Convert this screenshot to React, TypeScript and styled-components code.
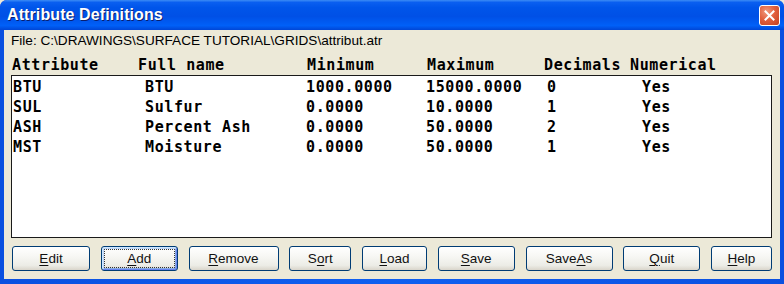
import React from "react";
import styled, { createGlobalStyle } from "styled-components";

const Global = createGlobalStyle`
  html, body { margin: 0; padding: 0; background: #ece9d8; }
  body { width: 784px; height: 284px; overflow: hidden; }
`;

const Window = styled.div`
  width: 784px;
  height: 284px;
  display: flex;
  flex-direction: column;
  background: #0831d9;
  border-radius: 7px 7px 0 0;
  overflow: hidden;
`;

const TitleBar = styled.div`
  height: 30px;
  flex: none;
  display: flex;
  align-items: center;
  justify-content: space-between;
  padding: 0 4px 0 7px;
  box-sizing: border-box;
  background: linear-gradient(
    to bottom,
    #3c8cf5 0%,
    #0a5ff0 8%,
    #0055ea 25%,
    #0050e6 55%,
    #0060f8 85%,
    #0046d6 100%
  );
`;

const Title = styled.span`
  font-family: "Liberation Sans", Arial, sans-serif;
  font-weight: bold;
  font-size: 16px;
  color: #ffffff;
  text-shadow: 1px 1px 0 #0a1e6e;
  letter-spacing: 0.1px;
`;

const CloseButton = styled.div`
  width: 21px;
  height: 21px;
  box-sizing: border-box;
  border: 1px solid #ffffff;
  border-radius: 3px;
  background: radial-gradient(circle at 35% 30%, #f09a7e 0%, #e2603e 45%, #c4401f 100%);
  display: flex;
  align-items: center;
  justify-content: center;
  margin-top: 1px;
`;

const Frame = styled.div`
  flex: 1;
  display: flex;
  padding: 0 4px 5px 4px;
  background: linear-gradient(to right, #0a50e0, #1060f0 50%, #0a50e0);
  min-height: 0;
`;

const Content = styled.div`
  flex: 1;
  display: flex;
  flex-direction: column;
  background: #ece9d8;
  padding: 4px 8px 8px 7px;
  min-width: 0;
`;

const FileLine = styled.div`
  font-family: "Liberation Sans", Arial, sans-serif;
  font-size: 13.6px;
  line-height: 14px;
  height: 14px;
  color: #000;
  white-space: nowrap;
`;

const Row = styled.div<{ $cols: string; $pad: number }>`
  display: grid;
  grid-template-columns: ${(p) => p.$cols};
  padding-left: ${(p) => p.$pad}px;
  height: 20px;
  align-items: center;
  font-family: "DejaVu Sans Mono", "Liberation Mono", monospace;
  font-weight: bold;
  font-size: 15px;
  letter-spacing: 0.6px;
  color: #000;
  white-space: pre;
`;

const HeaderRow = styled(Row)`
  margin-top: 7px;
`;

const ListBox = styled.div`
  height: 163px;
  box-sizing: border-box;
  border: 1px solid #1a1a1a;
  background: #ffffff;
  padding-top: 1px;
`;

const ButtonBar = styled.div`
  margin-top: 8px;
  display: flex;
  justify-content: space-between;
  padding-left: 1px;
`;

const Button = styled.div<{ $w: number; $default?: boolean }>`
  position: relative;
  width: ${(p) => p.$w}px;
  height: 25px;
  box-sizing: border-box;
  border: 1px solid #003c74;
  border-radius: 3px;
  background: linear-gradient(
    to bottom,
    #ffffff 0%,
    #f7f7f4 40%,
    #ececE6 80%,
    #d9d5cb 100%
  );
  display: flex;
  align-items: center;
  justify-content: center;
  font-family: "Liberation Sans", Arial, sans-serif;
  font-size: 13.5px;
  color: #111;
  box-shadow: ${(p) =>
    p.$default
      ? "inset 1px 1px 0 #cee7ff, inset -1px -1px 0 #6982ee, inset 2px 2px 0 #bcd4f6, inset -2px -2px 0 #89ade4"
      : "none"};

  &::after {
    content: "";
    display: ${(p) => (p.$default ? "block" : "none")};
    position: absolute;
    inset: 2px;
    border: 1px dotted #333;
    border-radius: 1px;
  }
`;

const Key = styled.span`
  text-decoration: underline;
  text-underline-offset: 2px;
`;

const HEAD_COLS = "126px 169px 120px 117px 86px 1fr";
const DATA_COLS = "132px 161px 120px 121px 95px 1fr";

const rows = [
  ["BTU", "BTU", "1000.0000", "15000.0000", "0", "Yes"],
  ["SUL", "Sulfur", "0.0000", "10.0000", "1", "Yes"],
  ["ASH", "Percent Ash", "0.0000", "50.0000", "2", "Yes"],
  ["MST", "Moisture", "0.0000", "50.0000", "1", "Yes"],
];

const buttons: { pre: string; key: string; post: string; w: number; def?: boolean }[] = [
  { pre: "", key: "E", post: "dit", w: 78 },
  { pre: "", key: "A", post: "dd", w: 77, def: true },
  { pre: "", key: "R", post: "emove", w: 90 },
  { pre: "S", key: "o", post: "rt", w: 62 },
  { pre: "", key: "L", post: "oad", w: 65 },
  { pre: "", key: "S", post: "ave", w: 77 },
  { pre: "Save", key: "A", post: "s", w: 87 },
  { pre: "", key: "Q", post: "uit", w: 77 },
  { pre: "", key: "H", post: "elp", w: 61 },
];

export default function App() {
  return (
    <>
      <Global />
      <Window>
        <TitleBar>
          <Title>Attribute Definitions</Title>
          <CloseButton>
            <svg width="11" height="11" viewBox="0 0 11 11">
              <path d="M1.5 1.5 L9.5 9.5 M9.5 1.5 L1.5 9.5" stroke="#fff" strokeWidth="2" strokeLinecap="square" />
            </svg>
          </CloseButton>
        </TitleBar>
        <Frame>
          <Content>
            <FileLine>File: C:\DRAWINGS\SURFACE TUTORIAL\GRIDS\attribut.atr</FileLine>
            <HeaderRow $cols={HEAD_COLS} $pad={1}>
              <span>Attribute</span>
              <span>Full name</span>
              <span>Minimum</span>
              <span>Maximum</span>
              <span>Decimals</span>
              <span>Numerical</span>
            </HeaderRow>
            <ListBox>
              {rows.map((r) => (
                <Row key={r[0]} $cols={DATA_COLS} $pad={1}>
                  {r.map((c, i) => (
                    <span key={i}>{c}</span>
                  ))}
                </Row>
              ))}
            </ListBox>
            <ButtonBar>
              {buttons.map((b) => (
                <Button key={b.pre + b.key + b.post} $w={b.w} $default={b.def}>
                  {b.pre}
                  <Key>{b.key}</Key>
                  {b.post}
                </Button>
              ))}
            </ButtonBar>
          </Content>
        </Frame>
      </Window>
    </>
  );
}
